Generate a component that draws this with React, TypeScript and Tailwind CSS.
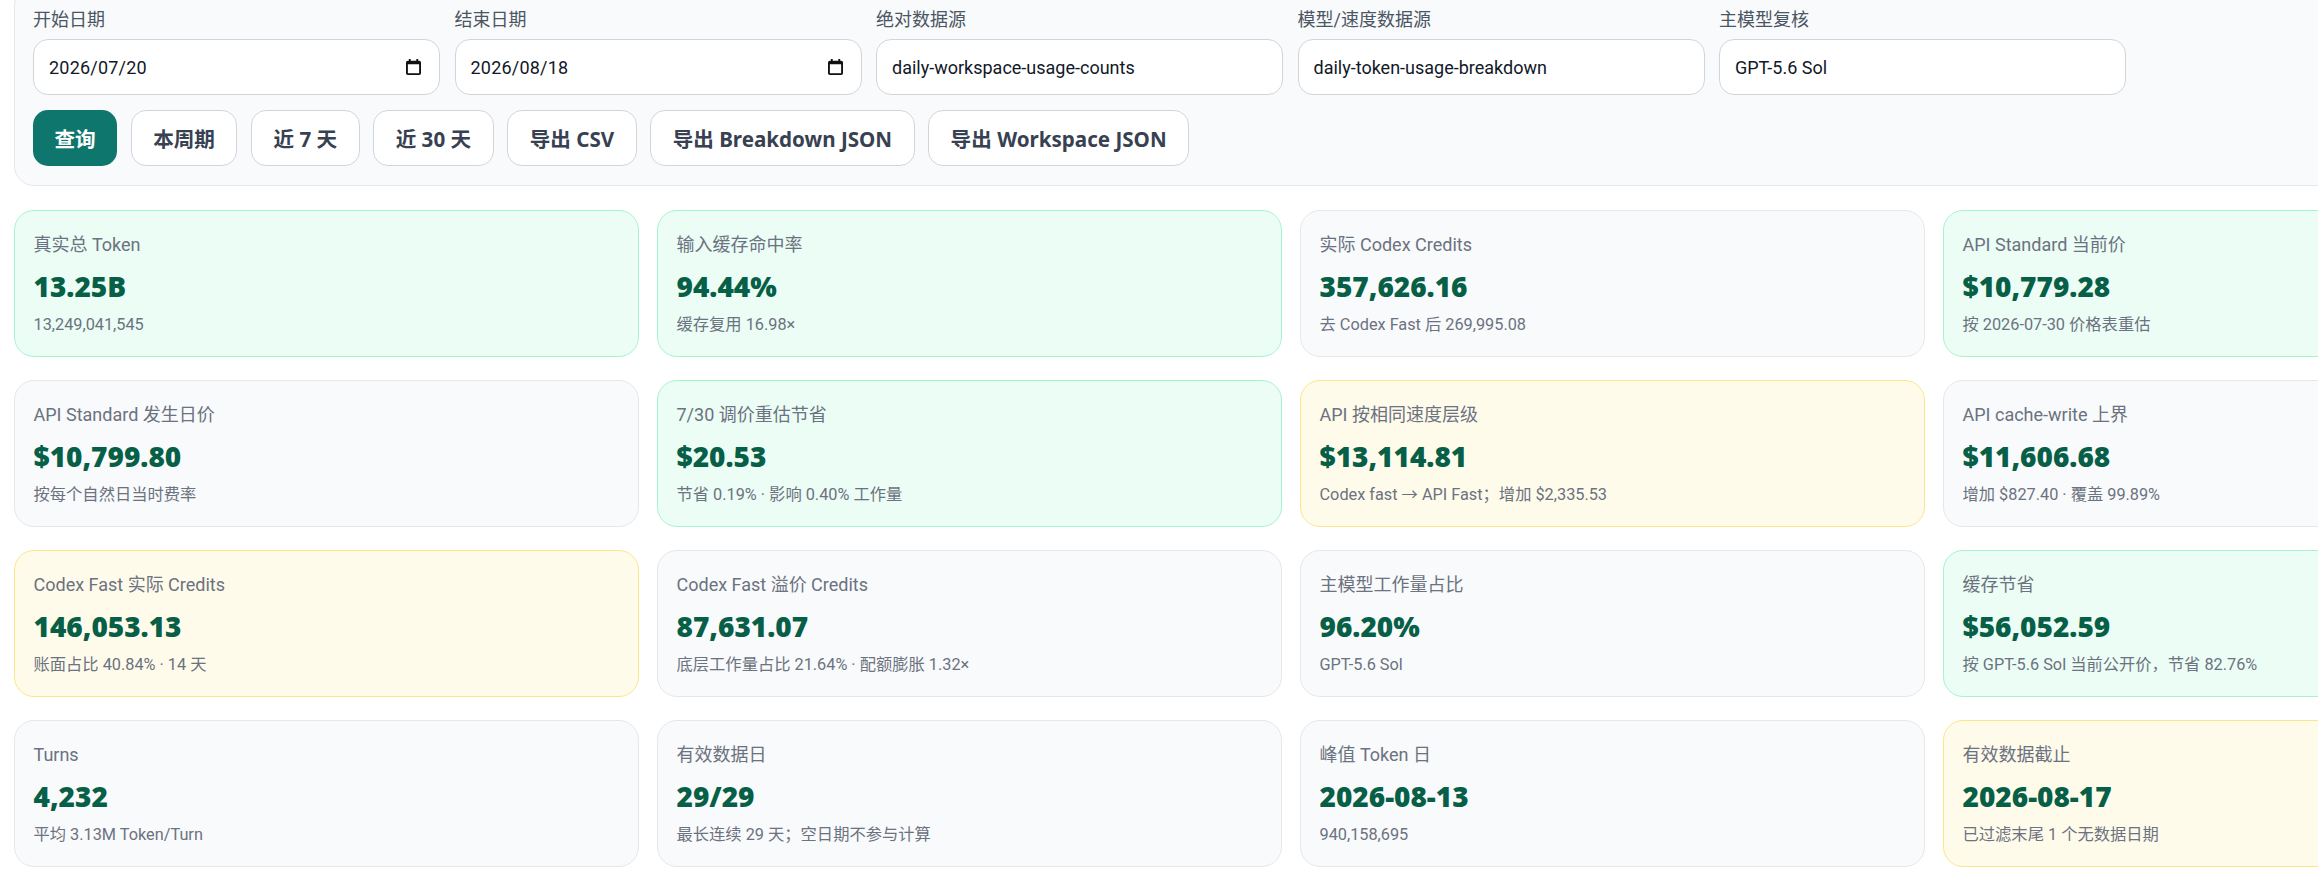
import React from "react";

type Tone = "green" | "yellow" | "plain";

const toneClass: Record<Tone, string> = {
  green: "bg-[#ecfdf5] border-[#a7f3d0]",
  yellow: "bg-[#fffbeb] border-[#fde68a]",
  plain: "bg-[#f9fafb] border-[#e5e7eb]",
};

const fields = [
  { label: "开始日期", value: "2026/07/20", date: true },
  { label: "结束日期", value: "2026/08/18", date: true },
  { label: "绝对数据源", value: "daily-workspace-usage-counts" },
  { label: "模型/速度数据源", value: "daily-token-usage-breakdown" },
  { label: "主模型复核", value: "GPT-5.6 Sol" },
];

const buttons = ["本周期", "近 7 天", "近 30 天", "导出 CSV", "导出 Breakdown JSON", "导出 Workspace JSON"];

const cards: { label: string; value: string; sub: string; tone: Tone }[] = [
  { label: "真实总 Token", value: "13.25B", sub: "13,249,041,545", tone: "green" },
  { label: "输入缓存命中率", value: "94.44%", sub: "缓存复用 16.98×", tone: "green" },
  { label: "实际 Codex Credits", value: "357,626.16", sub: "去 Codex Fast 后 269,995.08", tone: "plain" },
  { label: "API Standard 当前价", value: "$10,779.28", sub: "按 2026-07-30 价格表重估", tone: "green" },
  { label: "API Standard 发生日价", value: "$10,799.80", sub: "按每个自然日当时费率", tone: "plain" },
  { label: "7/30 调价重估节省", value: "$20.53", sub: "节省 0.19% · 影响 0.40% 工作量", tone: "green" },
  { label: "API 按相同速度层级", value: "$13,114.81", sub: "Codex fast → API Fast；增加 $2,335.53", tone: "yellow" },
  { label: "API cache-write 上界", value: "$11,606.68", sub: "增加 $827.40 · 覆盖 99.89%", tone: "plain" },
  { label: "Codex Fast 实际 Credits", value: "146,053.13", sub: "账面占比 40.84% · 14 天", tone: "yellow" },
  { label: "Codex Fast 溢价 Credits", value: "87,631.07", sub: "底层工作量占比 21.64% · 配额膨胀 1.32×", tone: "plain" },
  { label: "主模型工作量占比", value: "96.20%", sub: "GPT-5.6 Sol", tone: "plain" },
  { label: "缓存节省", value: "$56,052.59", sub: "按 GPT-5.6 Sol 当前公开价，节省 82.76%", tone: "green" },
  { label: "Turns", value: "4,232", sub: "平均 3.13M Token/Turn", tone: "plain" },
  { label: "有效数据日", value: "29/29", sub: "最长连续 29 天；空日期不参与计算", tone: "plain" },
  { label: "峰值 Token 日", value: "2026-08-13", sub: "940,158,695", tone: "plain" },
  { label: "有效数据截止", value: "2026-08-17", sub: "已过滤末尾 1 个无数据日期", tone: "yellow" },
];

const CalendarIcon = () => (
  <svg width="15" height="16" viewBox="0 0 16 18" className="shrink-0" preserveAspectRatio="none">
    <path d="M3 0h2v2h6V0h2v2h1a2 2 0 0 1 2 2v12a2 2 0 0 1-2 2H2a2 2 0 0 1-2-2V4a2 2 0 0 1 2-2h1zM2 6v10h12V6z" fill="#111" fillRule="evenodd" />
  </svg>
);

const App = () => {
  return (
    <div className="h-[879px] overflow-hidden bg-white font-['Roboto','Noto_Sans_CJK_SC',sans-serif]">
      <div className="w-[2554px] ml-[13.5px] -mt-[14px]">
        <section className="rounded-[20px] border border-[#e5e7eb] bg-[#f9fafb] px-[18.5px] pt-[21px] pb-[19px]">
          <div className="flex gap-[14.5px]">
            {fields.map((f) => (
              <div key={f.label} className="w-[407px]">
                <div className="text-[18px] leading-[24px] text-[#4b5563] mb-[7px]">{f.label}</div>
                <div className="h-[56px] flex items-center justify-between rounded-[15px] border border-[#d1d5db] bg-white pl-[15px] pr-[18px] text-[18px] text-[#111827]">
                  <span className={f.date ? "tracking-[0.2px]" : ""}>{f.value}</span>
                  {f.date && <CalendarIcon />}
                </div>
              </div>
            ))}
          </div>
          <div className="flex gap-[13.5px] mt-[15px] font-['Noto_Sans','Noto_Sans_CJK_SC',sans-serif]">
            <button className="h-[56px] px-[21.5px] pt-[2px] rounded-[15px] bg-[#0f766e] text-white text-[20.6px] font-bold">查询</button>
            {buttons.map((b) => (
              <button key={b} className="h-[56px] px-[21.5px] pt-[2px] rounded-[15px] border border-[#d1d5db] bg-white text-[#374151] text-[20.6px] font-bold">
                {b}
              </button>
            ))}
          </div>
        </section>
        <div className="grid grid-cols-[repeat(4,625px)] gap-x-[18px] gap-y-[23px] mt-[24px]">
          {cards.map((c) => (
            <div key={c.label} className={`h-[147px] rounded-[20px] border px-[19px] pt-[21px] ${toneClass[c.tone]}`}>
              <div className="text-[18px] leading-[26px] text-[#6b7280]">{c.label}</div>
              <div className="text-[28px] leading-[36px] font-black text-[#065f46] mt-[10px] font-['Noto_Sans',sans-serif]">{c.value}</div>
              <div className="text-[16.3px] leading-[22px] text-[#6b7280] mt-[10px]">{c.sub}</div>
            </div>
          ))}
        </div>
      </div>
    </div>
  );
};

export default App;
